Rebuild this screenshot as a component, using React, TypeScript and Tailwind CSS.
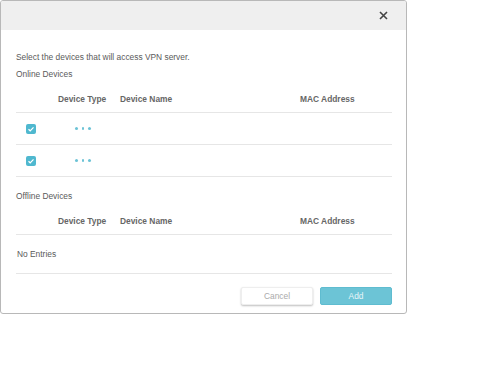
import React from "react";

const Check = () => (
  <div className="w-[10px] h-[10px] rounded-[2px] bg-[#4fb8cf] flex items-center justify-center">
    <svg width="8" height="8" viewBox="0 0 8 8">
      <path d="M1.5 4.2 L3.2 5.8 L6.5 2.3" stroke="#fff" strokeWidth="1.2" fill="none" />
    </svg>
  </div>
);

const Dots = () => (
  <div className="flex gap-[4px]">
    <span className="w-[2.5px] h-[2.5px] rounded-full bg-[#6cc3d6]" />
    <span className="w-[2.5px] h-[2.5px] rounded-full bg-[#6cc3d6]" />
    <span className="w-[2.5px] h-[2.5px] rounded-full bg-[#6cc3d6]" />
  </div>
);

const HeaderRow = () => (
  <div className="h-[27px] border-b border-[#e6e6e6] flex items-center font-bold text-[#666]">
    <div className="w-[42px]" />
    <div className="w-[62px]">Device Type</div>
    <div className="w-[180px]">Device Name</div>
    <div>MAC Address</div>
  </div>
);

const DeviceRow = () => (
  <div className="h-[32px] border-b border-[#e6e6e6] flex items-center">
    <div className="w-[42px] pl-[10px]">
      <Check />
    </div>
    <div className="w-[62px] flex justify-center pr-[12px]">
      <Dots />
    </div>
  </div>
);

export default function App() {
  return (
    <div className="w-[500px] h-[384px] bg-white" style={{ fontFamily: '"Liberation Sans", Arial, sans-serif' }}>
      <div className="w-[407px] h-[314px] border border-[#b8b8b8] rounded-[3px] bg-white flex flex-col text-[8.4px] leading-[12px] text-[#5a5a5a] overflow-hidden">
        <div className="h-[29px] bg-[#efefef] flex items-center justify-end pr-[18px] shrink-0">
          <svg width="9" height="9" viewBox="0 0 9 9">
            <path d="M1 1 L8 8 M8 1 L1 8" stroke="#444" strokeWidth="1.6" />
          </svg>
        </div>
        <div className="pl-[15px] pr-[14px] pt-[21px] flex flex-col">
          <div>Select the devices that will access VPN server.</div>
          <div className="mt-[5px]">Online Devices</div>
          <div className="mt-[6px]">
            <HeaderRow />
            <DeviceRow />
            <DeviceRow />
          </div>
          <div className="mt-[13px]">Offline Devices</div>
          <div className="mt-[6px]">
            <HeaderRow />
            <div className="h-[39px] border-b border-[#e6e6e6] flex items-center pl-[1px]">No Entries</div>
          </div>
          <div className="mt-[13px] flex justify-end gap-[7px]">
            <button className="w-[72px] h-[18px] bg-white rounded-[2px] text-[#aaa] shadow-[0_1px_2px_rgba(0,0,0,0.25)] border border-[#eee]">
              Cancel
            </button>
            <button className="w-[72px] h-[18px] bg-[#6cc4d6] rounded-[2px] text-[#e8f6f9] border border-[#5fbcd0]">
              Add
            </button>
          </div>
        </div>
      </div>
    </div>
  );
}
